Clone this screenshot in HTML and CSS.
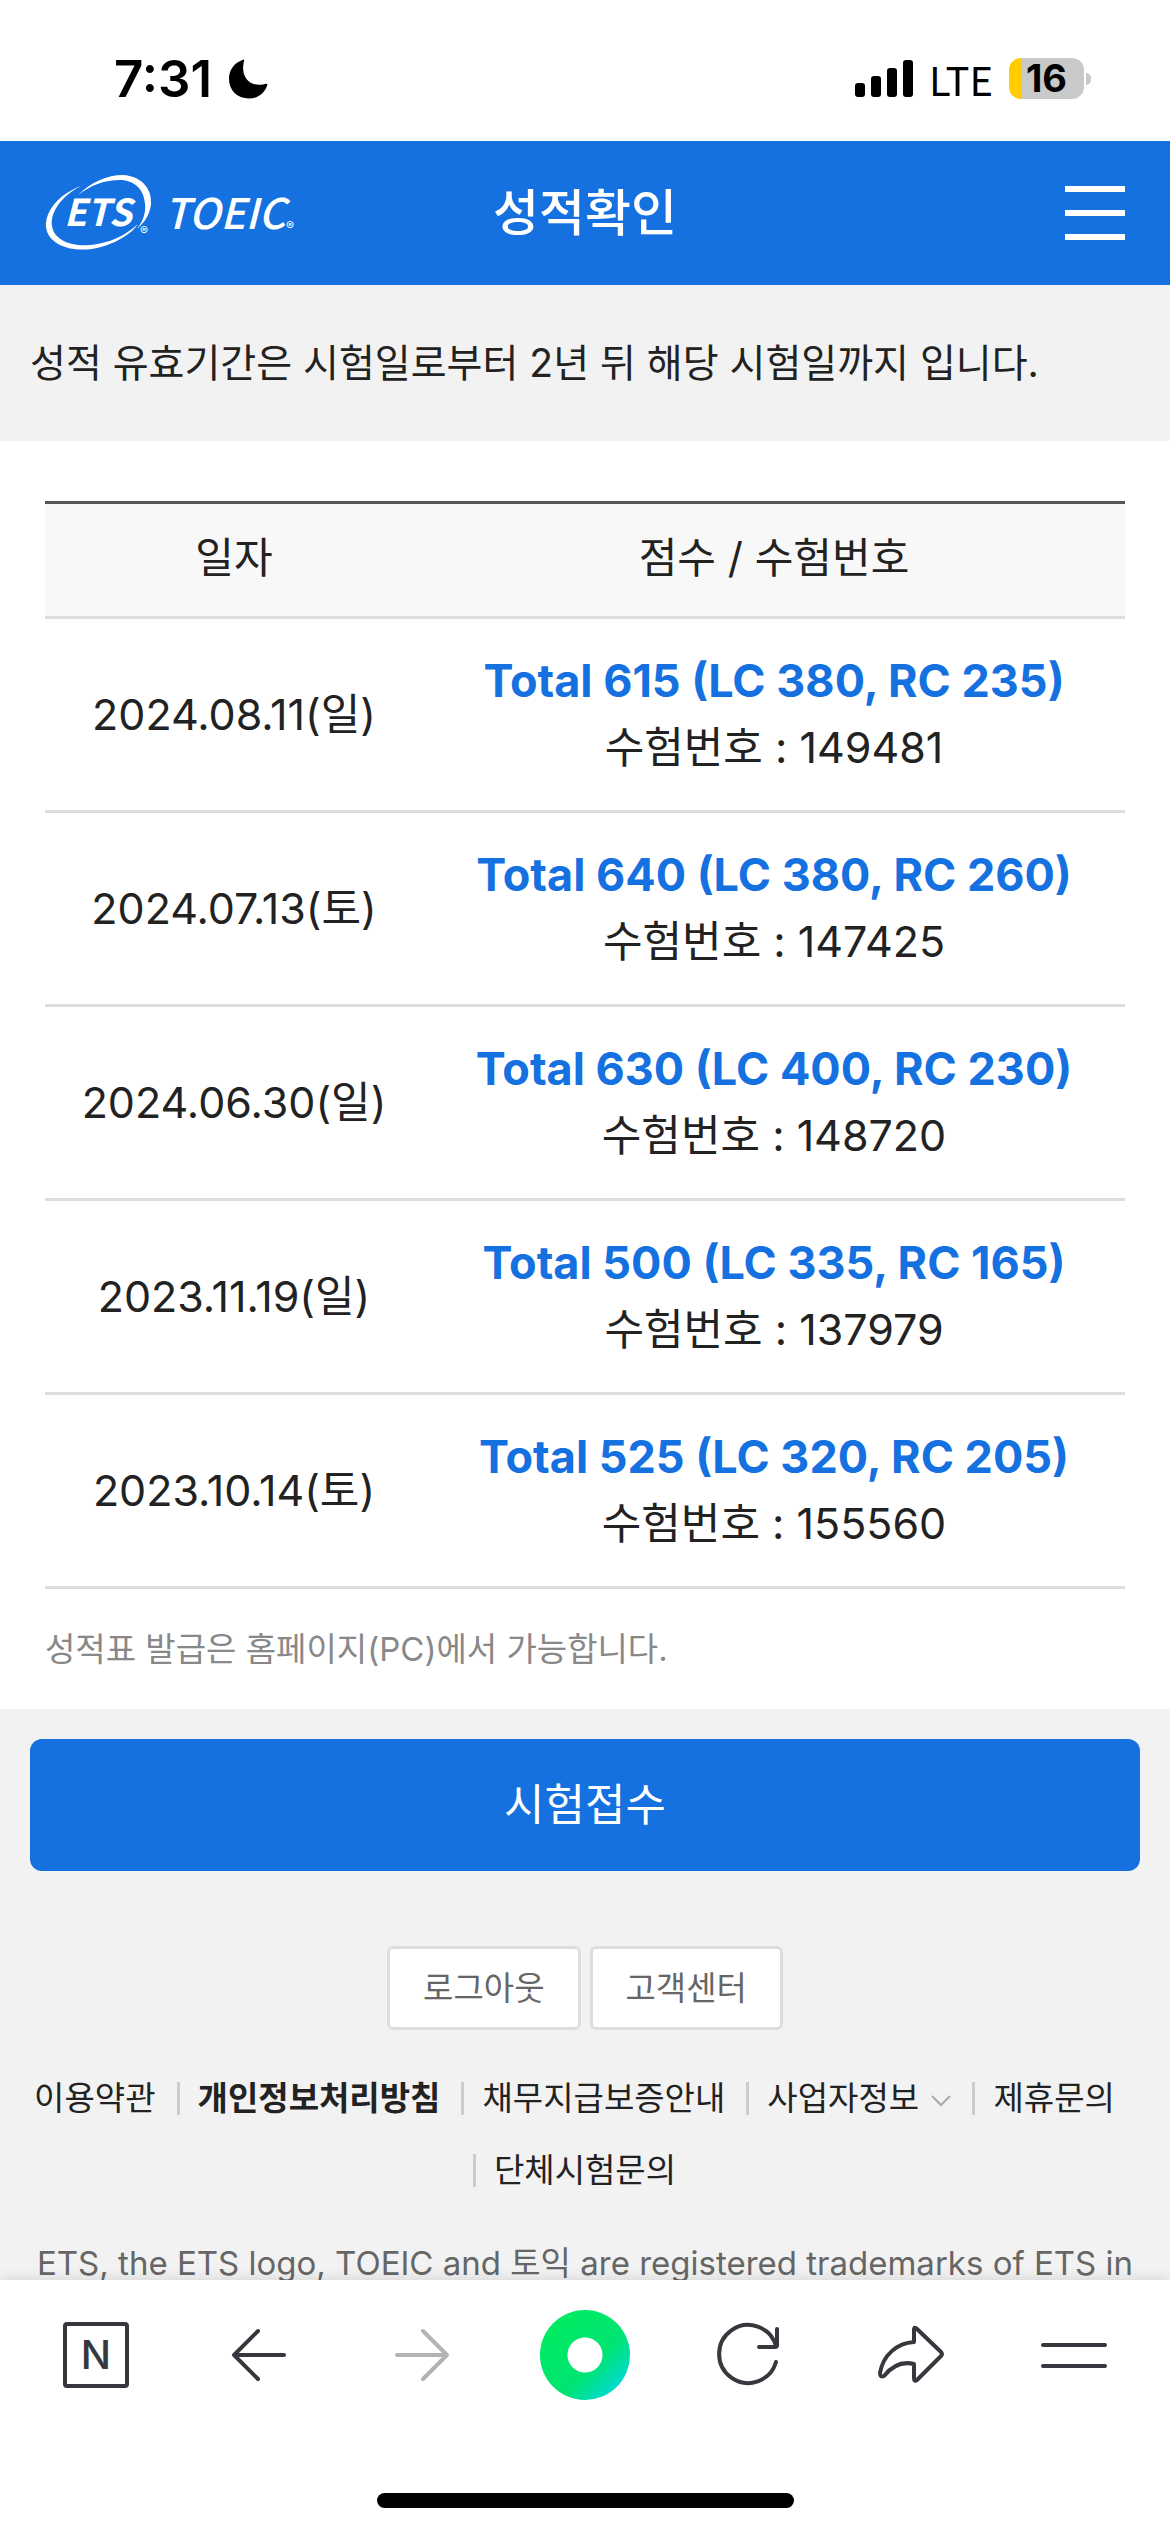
FILE: index.html
```html
<!DOCTYPE html>
<html lang="ko">
<head>
    <meta charset="UTF-8">
    <meta name="viewport" content="width=device-width, initial-scale=1.0">
    <title>성적확인</title>
    <link rel="stylesheet" href="styles.css">
</head>
<body>

<div class="status-bar">
    <div class="status-left">
        <span class="time">7:31</span>
        <svg class="moon" viewBox="0 0 40 40" width="40" height="40"><path d="M15 .8 C15.800 0 16.500 .8 16 2 C12.500 15 19 28 35 25.500 C37 25 39 24 39.500 25.500 C37 34 30 39.500 21 39.500 C9 39.500 1 31 1 20 C1 11 6 4 15 .8 Z"/></svg>
    </div>
    <div class="status-right">
        <svg viewBox="0 0 58 38" width="58" height="38">
            <rect x="0" y="23" width="10" height="14" rx="3"/>
            <rect x="16" y="16" width="10" height="21" rx="3"/>
            <rect x="32" y="8" width="10" height="29" rx="3"/>
            <rect x="48" y="0" width="10" height="37" rx="3"/>
        </svg>
        <span class="network">LTE</span>
        <div class="battery"><span class="battery-level">16</span></div>
    </div>
</div>

<header class="header">
    <a href="#" class="logo" aria-label="ETS TOEIC">
        <svg viewBox="0 0 260 80" width="260" height="80">
            <path d="M36 13 C14 21 0 38 1 54 C3 71 24 79 47 76 C66 73 86 62 93 51 C80 63 64 70 46 72 C26 74 9 67 7 53 C5 38 18 22 36 13 Z"/>
            <path d="M33 22 C46 9 62 2 78 2 C96 3 107 15 106 31 C105 41 100 49 92 56 C98 48 101 40 100 31 C99 16 89 7 75 7 C60 7 46 12 33 22 Z"/>
            <text class="logo-ets" x="19" y="53">ETS</text>
            <text class="logo-toeic" x="119" y="56">TOEIC</text>
            <text class="logo-mark" x="95" y="62">®</text>
            <text class="logo-mark" x="241" y="57">®</text>
        </svg>
    </a>
    <h1>성적확인</h1>
    <button class="menu-btn" aria-label="메뉴"><span></span><span></span><span></span></button>
</header>

<main class="page">
    <p class="notice">성적 유효기간은 시험일로부터 2년 뒤 해당 시험일까지 입니다.</p>

    <section class="scores">
        <table>
            <thead>
                <tr><th class="col-date">일자</th><th>점수 / 수험번호</th></tr>
            </thead>
            <tbody>
                <tr><td>2024.08.11(일)</td><td><strong>Total 615 (LC 380, RC 235)</strong>수험번호 : 149481</td></tr>
                <tr><td>2024.07.13(토)</td><td><strong>Total 640 (LC 380, RC 260)</strong>수험번호 : 147425</td></tr>
                <tr><td>2024.06.30(일)</td><td><strong>Total 630 (LC 400, RC 230)</strong>수험번호 : 148720</td></tr>
                <tr><td>2023.11.19(일)</td><td><strong>Total 500 (LC 335, RC 165)</strong>수험번호 : 137979</td></tr>
                <tr><td>2023.10.14(토)</td><td><strong>Total 525 (LC 320, RC 205)</strong>수험번호 : 155560</td></tr>
            </tbody>
        </table>
        <p class="scores-note">성적표 발급은 홈페이지(PC)에서 가능합니다.</p>
    </section>

    <button class="apply-btn">시험접수</button>

    <footer class="footer">
        <div class="footer-btns">
            <button>로그아웃</button>
            <button>고객센터</button>
        </div>
        <ul class="footer-links">
            <li><a href="#">이용약관</a></li>
            <li><a href="#"><b>개인정보처리방침</b></a></li>
            <li><a href="#">채무지급보증안내</a></li>
            <li><a href="#">사업자정보 <svg viewBox="0 0 20 12" width="20" height="12"><path d="M1 1 L10 10 L19 1"/></svg></a></li>
            <li><a href="#">제휴문의</a></li>
            <li><a href="#">단체시험문의</a></li>
        </ul>
        <p class="legal">ETS, the ETS logo, TOEIC and 토익 are registered trademarks of ETS in</p>
    </footer>
</main>

<nav class="toolbar">
    <div class="toolbar-icons">
        <button aria-label="홈">
            <svg viewBox="0 0 66 66"><rect x="2" y="2" width="62" height="62" rx="2"/><text x="33" y="47">N</text></svg>
        </button>
        <button aria-label="뒤로">
            <svg viewBox="0 0 66 66"><path d="M32 9 L8 33 L32 57 M8 33 H58"/></svg>
        </button>
        <button aria-label="앞으로" class="disabled" disabled>
            <svg viewBox="0 0 66 66"><path d="M34 9 L58 33 L34 57 M58 33 H8"/></svg>
        </button>
        <button aria-label="그린닷" class="green-dot"></button>
        <button aria-label="새로고침">
            <svg viewBox="0 0 66 66"><path d="M61 40 A29 29 0 1 1 61 24 M62 7 V23 Q62 25 60 25 H44"/></svg>
        </button>
        <button aria-label="공유">
            <svg viewBox="0 0 66 66"><path d="M36 8 Q36 4 39 7 L63 30 Q65 32 63 34 L39 58 Q36 60 36 56 V42 C24 39 14 44 6 54 Q2 56 2 51 C5 33 19 21 36 20 Z"/></svg>
        </button>
        <button aria-label="더보기">
            <svg viewBox="0 0 66 66"><path d="M2 23 H64 M2 44 H64"/></svg>
        </button>
    </div>
    <div class="home-indicator"></div>
</nav>

</body>
</html>
```
FILE: styles.css
```css
* {
    margin: 0;
    padding: 0;
    box-sizing: border-box;
}

body {
    display: flex;
    flex-direction: column;
    height: 100vh;
    background-color: #f2f2f2;
    color: #222;
    font-family: Inter, "Noto Sans CJK KR", sans-serif;
}

button {
    border: none;
    background: none;
    font-family: inherit;
    cursor: pointer;
}

a {
    color: inherit;
    text-decoration: none;
}

/* Status bar */
.status-bar {
    display: flex;
    justify-content: space-between;
    align-items: center;
    flex-shrink: 0;
    padding: 48px 79px 32px 114px;
    background-color: #fff;
    color: #000;
}

.status-left,
.status-right {
    display: flex;
    align-items: center;
    gap: 16px;
}

.time {
    font-size: 51px;
    font-weight: 600;
    line-height: 61px;
}

.network {
    font-family: "Noto Sans CJK KR", sans-serif;
    font-size: 40px;
    line-height: 60px;
}

.battery {
    display: flex;
    align-items: center;
}

.battery-level {
    width: 75px;
    border-radius: 12px;
    background: linear-gradient(to right, #fc0 13px, #c9c9c9 13px);
    font-size: 38px;
    font-weight: 700;
    line-height: 41px;
    text-align: center;
}

.battery::after {
    content: "";
    width: 5px;
    height: 12px;
    margin-left: 2px;
    border-radius: 0 5px 5px 0;
    background-color: #c9c9c9;
}

/* Header */
.header {
    display: grid;
    grid-template-columns: 1fr auto 1fr;
    align-items: center;
    flex-shrink: 0;
    padding: 32px 45px;
    background-color: #1570e0;
    color: #fff;
}

.header h1 {
    font-size: 50px;
    font-weight: 500;
    line-height: 72px;
}

.logo svg {
    display: block;
    fill: #fff;
}

.logo-ets,
.logo-toeic {
    font-family: "Noto Sans CJK KR", sans-serif;
    font-style: italic;
}

.logo-ets {
    font-size: 37px;
    font-weight: 700;
}

.logo-toeic {
    font-size: 42px;
    font-weight: 500;
}

.logo-mark {
    font-size: 12px;
}

.menu-btn {
    display: flex;
    flex-direction: column;
    justify-self: end;
    gap: 18px;
    width: 60px;
}

.menu-btn span {
    height: 6px;
    background-color: #fff;
}

/* Content */
.page {
    flex: 1;
    overflow: hidden;
}

.notice {
    padding: 48px 30px;
    font-size: 39px;
    line-height: 60px;
}

.scores {
    padding: 60px 45px 30px;
    background-color: #fff;
}

.scores table {
    width: 100%;
    border-top: 3px solid #555;
    border-collapse: separate;
    border-spacing: 0;
    table-layout: fixed;
}

.scores th {
    padding: 24px 0 28px;
    border-bottom: 3px solid #ddd;
    background-color: #f8f8f8;
    font-size: 42px;
    font-weight: 400;
    line-height: 60px;
}

.scores .col-date {
    width: 35%;
}

.scores td {
    padding: 29px 0 30px;
    border-bottom: 3px solid #ddd;
    font-size: 43px;
    line-height: 66px;
    text-align: center;
}

.scores strong {
    display: block;
    color: #1570e0;
    font-size: 45px;
    font-weight: 700;
}

.scores-note {
    padding-top: 30px;
    color: #888;
    font-size: 33px;
    line-height: 60px;
}

.apply-btn {
    display: block;
    width: calc(100% - 60px);
    margin: 30px;
    padding: 30px;
    border-radius: 12px;
    background-color: #1570e0;
    color: #fff;
    font-size: 44px;
    line-height: 72px;
}

/* Footer */
.footer {
    padding: 45px 30px 0;
}

.footer-btns {
    display: flex;
    justify-content: center;
    gap: 9px;
}

.footer-btns button {
    padding: 15px 33px;
    border: 3px solid #ddd;
    border-radius: 6px;
    background-color: #fff;
    color: #666;
    font-size: 33px;
    line-height: 48px;
}

.footer-links {
    display: flex;
    flex-wrap: wrap;
    justify-content: center;
    margin-top: 32px;
    list-style: none;
    font-size: 33px;
    line-height: 72px;
}

.footer-links li {
    display: flex;
    align-items: center;
    padding-right: 21px;
}

.footer-links li + li::before {
    content: "";
    width: 3px;
    height: 33px;
    margin-right: 18px;
    background-color: #ccc;
}

.footer-links svg {
    margin-left: 3px;
    vertical-align: middle;
    fill: none;
    stroke: #aaa;
    stroke-width: 2;
}

.legal {
    margin-top: 30px;
    color: #666;
    font-size: 33px;
    line-height: 54px;
    text-align: center;
    white-space: nowrap;
}

/* Browser toolbar */
.toolbar {
    position: relative;
    flex-shrink: 0;
    padding: 30px 14px 24px;
    background-color: #fff;
    box-shadow: 0 -1px 12px rgba(0, 0, 0, 0.12);
}

.toolbar-icons {
    display: grid;
    grid-template-columns: repeat(7, 1fr);
    align-items: center;
    justify-items: center;
}

.toolbar svg {
    display: block;
    width: 66px;
    height: 66px;
    fill: none;
    stroke: #36383d;
    stroke-width: 4;
    stroke-linecap: round;
    stroke-linejoin: round;
}

.toolbar text {
    fill: #36383d;
    stroke: none;
    font-size: 40px;
    font-weight: 500;
    text-anchor: middle;
}

.toolbar .disabled svg {
    stroke: #b3b3b3;
}

.green-dot {
    width: 90px;
    height: 90px;
    border-radius: 50%;
    background: radial-gradient(circle, #fff 17px, transparent 18px), linear-gradient(135deg, #00ea64 20%, #00e472 60%, #00d8f0 95%);
}

.home-indicator {
    width: 417px;
    height: 15px;
    margin: 93px auto 0;
    border-radius: 8px;
    background-color: #000;
}
```
